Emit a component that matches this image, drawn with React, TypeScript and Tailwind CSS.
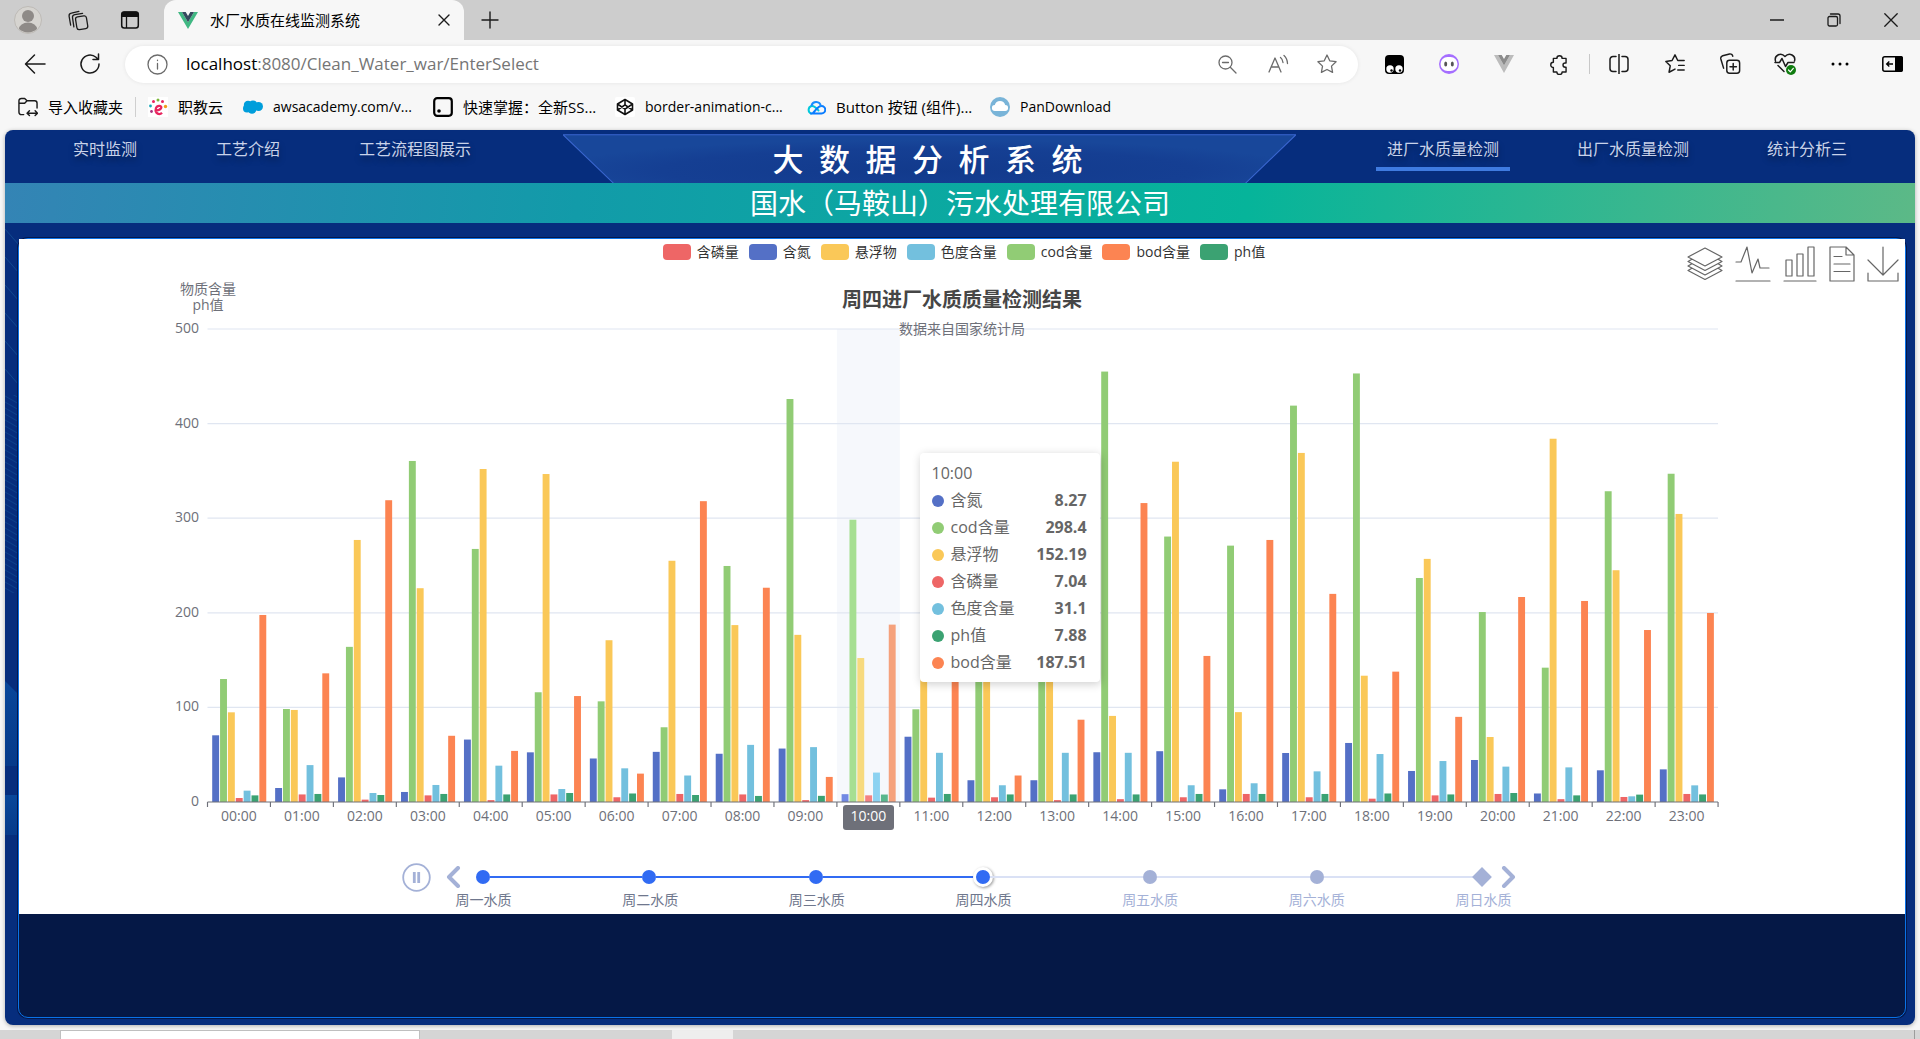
import React from "react";

const SERIES = [
  { name: "含氮", color: "#5470c6" },
  { name: "cod含量", color: "#91cc75" },
  { name: "悬浮物", color: "#fac858" },
  { name: "含磷量", color: "#ee6666" },
  { name: "色度含量", color: "#73c0de" },
  { name: "ph值", color: "#3ba272" },
  { name: "bod含量", color: "#fc8452" },
];
const ACTIVE_COLORS = ["#7189e3", "#a6df92", "#f7da7e", "#f48181", "#8cd2f1", "#5ab78d", "#f5a17c"];

const DATA = [
  [70.5, 130, 94.8, 4.2, 12, 7, 197.7],
  [14.8, 98.3, 97.3, 8, 39, 8.5, 136],
  [26, 164, 277, 2.5, 9.5, 7.4, 319],
  [10.6, 360.5, 226, 7, 18, 8.5, 70],
  [66, 267.5, 352, 2, 38.4, 8, 54],
  [52.5, 116, 346.7, 8, 13.7, 9.5, 112],
  [46, 106.4, 171, 5, 35.6, 9, 30],
  [53, 79, 255, 8.5, 28, 7.4, 318],
  [51, 249.5, 187, 8, 60.4, 6.4, 226.5],
  [56.5, 426, 176.7, 2, 58, 6.5, 26.5],
  [8.27, 298.4, 152.19, 7.04, 31.1, 7.88, 187.51],
  [69, 98, 318, 4.6, 52, 8.5, 200],
  [23, 200, 180, 5, 17.7, 8, 28],
  [23, 200, 180, 2, 52, 8, 87],
  [52.6, 455, 91, 3, 52, 8, 316],
  [53.7, 280.6, 359.7, 5, 17.7, 8.5, 154.4],
  [13.4, 271, 95, 8.5, 19.8, 8.5, 277],
  [51.8, 419, 369, 5, 32.4, 8.5, 220],
  [62.4, 453, 133.5, 3.5, 50.7, 9, 137.8],
  [32.8, 236.8, 257, 7, 43.3, 8, 90],
  [44.4, 200.8, 68.7, 8.5, 37.4, 9.5, 216.7],
  [9, 142, 384, 3, 36.6, 7, 212.5],
  [33.5, 328.5, 245, 5.3, 6, 7.8, 181.8],
  [34.5, 347, 304.5, 8.5, 17.6, 8, 199.8],
];

const LEGEND = [
  { name: "含磷量", box: "bg-[#ee6666]" },
  { name: "含氮", box: "bg-[#5470c6]" },
  { name: "悬浮物", box: "bg-[#fac858]" },
  { name: "色度含量", box: "bg-[#73c0de]" },
  { name: "cod含量", box: "bg-[#91cc75]" },
  { name: "bod含量", box: "bg-[#fc8452]" },
  { name: "ph值", box: "bg-[#3ba272]" },
];

const DAYS = ["周一水质", "周二水质", "周三水质", "周四水质", "周五水质", "周六水质", "周日水质"];

function Stroke({ size = 22, width, w = 1.5, vb = "0 0 24 24", color = "#1b1b1b", children }: {
  size?: number; width?: number; w?: number; vb?: string; color?: string; children: React.ReactNode;
}) {
  return (
    <svg width={width ?? size} height={size} viewBox={vb} fill="none" stroke={color} strokeWidth={w} strokeLinecap="round" strokeLinejoin="round" aria-hidden="true">
      {children}
    </svg>
  );
}

function IconButton({ label, className, children }: { label: string; className: string; children: React.ReactNode }) {
  return (
    <button type="button" aria-label={label} className={"flex shrink-0 items-center justify-center " + className}>
      {children}
    </button>
  );
}

function TabStrip() {
  return (
    <div className="flex h-10 items-stretch bg-[#cdcdcd] pr-px">
      <div className="flex w-[164px] shrink-0 items-center">
        <IconButton label="个人资料" className="ml-3.5 w-7">
          <svg width="28" height="28" viewBox="0 0 28 28">
            <circle cx="14" cy="14" r="13.500" fill="#d6d4d0" stroke="#bdbab6" />
            <circle cx="14" cy="10" r="6" fill="#8e8a87" />
            <path d="M5 23a9 6.500 0 0 1 18 0a13.400 13.400 0 0 1-18 0z" fill="#8e8a87" />
          </svg>
        </IconButton>
        <IconButton label="工作区" className="ml-6 w-6">
          <Stroke size={22} w={1.4}>
            <rect x="10" y="8" width="12" height="14" rx="2.500" transform="rotate(-9 16 15)" />
            <path d="M7.500 19.500 6 9.500a3 3 0 0 1 2.500-3.300L17 4.800M4 17.500 2.300 8a3 3 0 0 1 2.500-3.400L13 2.500" />
          </Stroke>
        </IconButton>
        <IconButton label="标签页操作" className="ml-7 w-6">
          <svg width="20" height="20" viewBox="0 0 20 20">
            <rect x="1.700" y="2" width="16.600" height="16" rx="2.500" fill="none" stroke="#111" strokeWidth="1.500" />
            <path d="M1.500 7V4A2.500 2.500 0 0 1 4 1.500h12A2.500 2.500 0 0 1 18.500 4v3z" fill="#111" />
            <path d="M6.500 7v11" stroke="#111" strokeWidth="1.300" />
          </svg>
        </IconButton>
      </div>
      <div className="flex w-[300px] shrink-0 items-center rounded-t-xl bg-[#f7f7f7] pl-3.5">
        <svg width="20" height="17" viewBox="0 0 20 17" aria-hidden="true">
          <path d="M0 0h4l6 10.300L16 0h4L10 17z" fill="#41b883" />
          <path d="M4 0h3.700L10 4l2.300-4H16l-6 10.300z" fill="#35495e" />
        </svg>
        <span className="ml-3 grow text-[15px] leading-5 text-black">水厂水质在线监测系统</span>
        <IconButton label="关闭标签页" className="mr-3 w-4">
          <Stroke size={12} w={1.400} vb="0 0 12 12"><path d="M1 1l10 10M11 1 1 11" /></Stroke>
        </IconButton>
      </div>
      <IconButton label="新建标签页" className="ml-3.5 w-6">
        <Stroke size={18} w={1.400} vb="0 0 18 18"><path d="M9 1v16M1 9h16" /></Stroke>
      </IconButton>
      <div className="grow" />
      <IconButton label="最小化" className="w-[57px]">
        <Stroke size={14} w={1.400} vb="0 0 14 14"><path d="M0 7h14" /></Stroke>
      </IconButton>
      <IconButton label="还原" className="w-[57px]">
        <Stroke size={14} w={1.300} vb="0 0 14 14">
          <rect x="1" y="3.500" width="9.500" height="9.500" rx="1.500" /><path d="M3.500 1H11a2 2 0 0 1 2 2v7.500" />
        </Stroke>
      </IconButton>
      <IconButton label="关闭窗口" className="w-[57px]">
        <Stroke size={14} w={1.300} vb="0 0 14 14"><path d="M.8.8l12.400 12.400M13.200.8.8 13.200" /></Stroke>
      </IconButton>
    </div>
  );
}

function Toolbar() {
  return (
    <div className="flex h-12 items-center">
      <IconButton label="后退" className="ml-6 w-[22px]">
        <Stroke size={22} w={1.500} vb="0 0 22 22"><path d="M21 11H2M10.500 2 1.500 11l9 9" /></Stroke>
      </IconButton>
      <IconButton label="刷新" className="ml-8 w-6">
        <Stroke size={22} w={1.500} vb="0 0 22 22"><path d="M20 11a9 9 0 1 1-3-6.700L19 6.200M19.500 1v5.500H14" /></Stroke>
      </IconButton>
      <div className="ml-[23px] flex h-[37px] grow items-center rounded-full bg-white pl-[22px] shadow-[0_0_4px_rgba(0,0,0,0.08)]">
        <Stroke size={21} w={1.300} vb="0 0 21 21" color="#6b6b6b">
          <circle cx="10.500" cy="10.500" r="9.500" /><path d="M10.500 9.500v5.500M10.500 6.200v.3" />
        </Stroke>
        <div className="relative ml-[18px] h-6 grow">
          <input aria-label="地址栏" defaultValue="localhost:8080/Clean_Water_war/EnterSelect" className="h-6 w-full bg-transparent text-[17px] leading-6 text-[#757575] outline-none" />
          <span aria-hidden="true" className="pointer-events-none absolute left-0 top-0 bg-white text-[17px] leading-6 text-black">localhost</span>
        </div>
        <IconButton label="缩小" className="w-[22px]">
          <Stroke size={19} w={1.300} vb="0 0 19 19" color="#6b6b6b"><circle cx="7.500" cy="7.500" r="6.500" /><path d="M4.500 7.500h6M12.300 12.300 18 18" /></Stroke>
        </IconButton>
        <IconButton label="大声朗读" className="ml-7 w-6">
          <Stroke size={21} w={1.300} vb="0 0 21 21" color="#6b6b6b"><path d="M1 18 7 4l6 14M3.200 13h7.600M12.500 3.500q2 1.500 2.500 5M16 1.500q3.300 3 3.500 8" /></Stroke>
        </IconButton>
        <IconButton label="收藏此页" className="ml-[25px] mr-[19px] w-6">
          <Stroke size={22} w={1.400} color="#6b6b6b"><path d="m12 2.200 3 6.300 6.900 1-5 4.800 1.200 6.900L12 18l-6.100 3.200 1.200-6.900-5-4.800 6.900-1z" /></Stroke>
        </IconButton>
      </div>
      <IconButton label="篡改猴" className="ml-[25px] w-[22px]">
        <svg width="19" height="19" viewBox="0 0 19 19">
          <rect width="19" height="19" rx="4" fill="#000" /><circle cx="5" cy="14" r="3.700" fill="#fff" /><circle cx="14" cy="14" r="3.700" fill="#fff" />
          <circle cx="6.500" cy="15.500" r="1.200" fill="#000" /><circle cx="15" cy="15.500" r="1.200" fill="#000" />
        </svg>
      </IconButton>
      <IconButton label="扩展" className="ml-[33px] w-[22px]">
        <svg width="20" height="20" viewBox="0 0 20 20">
          <circle cx="10" cy="10" r="10" fill="#a56eff" /><rect x="1.500" y="3" width="17" height="14" rx="7" fill="#fff" />
          <ellipse cx="6.700" cy="10" rx="1.500" ry="2.500" fill="#555" /><ellipse cx="13.300" cy="10" rx="1.500" ry="2.500" fill="#555" />
        </svg>
      </IconButton>
      <IconButton label="Vue 开发工具" className="ml-[33px] w-[22px]">
        <svg width="20" height="18" viewBox="0 0 20 18">
          <path d="M0 0h4l6 10.500L16 0h4L10 18z" fill="#bcbcbc" /><path d="M4 0h3.700L10 4l2.300-4H16l-6 10.500z" fill="#8b8b8b" />
        </svg>
      </IconButton>
      <IconButton label="扩展程序" className="ml-[33px] w-[22px]">
        <Stroke size={21} w={1.600}><path d="M9 5a3 3 0 0 1 6 0h4.500v5.200h-1a2.500 2.500 0 0 0 0 5h1V20.500H15a3 3 0 0 1-6 0H5v-5a3 3 0 0 1 0-6V5z" /></Stroke>
      </IconButton>
      <span className="ml-[19px] h-5 w-px bg-[#c8c8c8]" />
      <IconButton label="拆分屏幕" className="ml-[18px] w-[22px]">
        <Stroke size={20} w={1.500} vb="0 0 20 20"><path d="M7 2.500H4a3 3 0 0 0-3 3v9a3 3 0 0 0 3 3h3M13 2.500h3a3 3 0 0 1 3 3v9a3 3 0 0 1-3 3h-3M10 0v20" /></Stroke>
      </IconButton>
      <IconButton label="收藏夹" className="ml-[34px] w-[22px]">
        <Stroke size={22} w={1.600}><path d="M12 17.500 5.500 21l1.300-7L2 9.200l6.800-1L12 2l3 6.200h7M16 13.500h6M15 18.500h7" /></Stroke>
      </IconButton>
      <IconButton label="集锦" className="ml-[33px] w-[22px]">
        <Stroke size={22} w={1.600}><rect x="8.500" y="8" width="14" height="14" rx="3" /><path d="M15.500 11.500v7M12 15h7M5 16.500 2 6.500a3 3 0 0 1 2-3.500l7.500-2A3 3 0 0 1 15 3.500" /></Stroke>
      </IconButton>
      <IconButton label="浏览器概要" className="ml-[33px] w-[22px]">
        <svg width="22" height="24" viewBox="0 0 22 24" fill="none" stroke="#1b1b1b" strokeWidth="1.500" strokeLinecap="round" strokeLinejoin="round">
          <path d="M1.500 9C0 4 6.500-.5 11 4.500 15.500-.5 22 4 20.500 9M4 13.500l6 6M1 10.500h4.500L8 6.500l3.500 8 2.500-4h6" />
          <circle cx="17" cy="18" r="5" fill="#107c10" stroke="none" /><path d="m14.500 18 1.800 1.800 3-3.500" stroke="#fff" strokeWidth="1.200" />
        </svg>
      </IconButton>
      <IconButton label="设置及其他" className="ml-[33px] w-[22px]">
        <svg width="18" height="4" viewBox="0 0 18 4"><circle cx="2" cy="2" r="1.500" /><circle cx="9" cy="2" r="1.500" /><circle cx="16" cy="2" r="1.500" /></svg>
      </IconButton>
      <IconButton label="侧边栏" className="ml-[30px] mr-[17px] w-[22px]">
        <svg width="21" height="16" viewBox="0 0 21 16">
          <rect x=".8" y=".8" width="19.400" height="14.400" rx="2" fill="none" stroke="#000" strokeWidth="1.500" /><path d="M13 0h6a2 2 0 0 1 2 2v12a2 2 0 0 1-2 2h-6z" />
          <path d="M11 8H5m2.300-2.500L4.700 8l2.600 2.500" fill="none" stroke="#000" strokeWidth="1.400" />
        </svg>
      </IconButton>
    </div>
  );
}

function Bookmark({ label, className, children }: { label: string; className: string; children: React.ReactNode }) {
  return (
    <a href="#" className={"flex shrink-0 items-center gap-2.5 whitespace-nowrap leading-5 " + className}>
      <span className="flex w-5 shrink-0 justify-center">{children}</span>
      <span>{label}</span>
    </a>
  );
}

function Bookmarks() {
  return (
    <nav aria-label="收藏夹栏" className="mb-0.5 flex h-[38px] items-center pl-[18px] text-black">
      <Bookmark label="导入收藏夹" className="w-[117px] text-[15px]">
        <svg width="21" height="20" viewBox="0 0 21 20" fill="none" stroke="#1b1b1b" strokeWidth="1.500" strokeLinecap="round" strokeLinejoin="round">
          <path d="M6 18H3.500A2.500 2.500 0 0 1 1 15.500v-12A2.500 2.500 0 0 1 3.500 1H7l2.500 2.500h8A2.500 2.500 0 0 1 20 6v5M1 6h6l2.500-2.500M10 16.500h10M12 14l-2.500 2.500L12 19M18 14l2.500 2.500L18 19" />
        </svg>
      </Bookmark>
      <span className="mr-3 h-5 w-px shrink-0 bg-[#cfcfcf]" />
      <Bookmark label="职教云" className="w-[95px] text-[15px]">
        <svg width="20" height="20" viewBox="0 0 20 20">
          <rect width="20" height="20" fill="#fff" />
          <path d="M7 13.500c6.500 0 8-4.300 4.500-4.700-3.500-.3-5 4-3 7 1.300 1.700 4 1.700 5.500 0" fill="none" stroke="#e8255f" strokeWidth="2.300" />
          <circle cx="10" cy="3" r="1.500" fill="#7cb83c" /><circle cx="5.500" cy="4.500" r="1.500" fill="#e8255f" /><circle cx="2.500" cy="9" r="1.400" fill="#18a8b8" />
          <circle cx="14.500" cy="4.500" r="1.500" fill="#e8255f" /><circle cx="17.500" cy="9.500" r="1.700" fill="#f29a1a" /><circle cx="3.500" cy="14.500" r="1.400" fill="#a83280" />
        </svg>
      </Bookmark>
      <Bookmark label="awsacademy.com/v..." className="w-[190px] text-[14px]">
        <svg width="20" height="14" viewBox="0 0 20 14"><g fill="#009edb"><circle cx="5" cy="5" r="4.200" /><circle cx="10" cy="4.500" r="4" /><circle cx="15.500" cy="6.500" r="4.500" /><circle cx="4" cy="8.500" r="4" /><circle cx="9" cy="9.500" r="4.300" /></g></svg>
      </Bookmark>
      <Bookmark label="快速掌握：全新SS..." className="w-[182px] text-[15px]">
        <svg width="20" height="20" viewBox="0 0 20 20"><rect x="1.200" y="1.200" width="17.600" height="17.600" rx="3" fill="none" stroke="#000" strokeWidth="2.200" /><circle cx="6" cy="14" r="1.800" /></svg>
      </Bookmark>
      <Bookmark label="border-animation-c..." className="w-[191px] text-[14px]">
        <svg width="20" height="20" viewBox="0 0 20 20"><rect width="20" height="20" rx="2" fill="#fff" /><path d="M10 2.500 17.500 7v6L10 17.500 2.500 13V7zM2.500 7 10 12.200 17.500 7M2.500 13 10 7.800l7.500 5.200M10 2.500v5.300M10 12.200v5.300" fill="none" stroke="#111" strokeWidth="1.600" strokeLinejoin="round" /></svg>
      </Bookmark>
      <Bookmark label="Button 按钮 (组件)..." className="w-[184px] text-[15px]">
        <svg width="20" height="16" viewBox="0 0 20 16" fill="none" strokeWidth="2" strokeLinecap="round">
          <path d="M5 14.500a4 4 0 0 1 .5-7.500c3-.5 4.500 1.500 7 4.500" stroke="#00c8dc" /><path d="M5 14.500h10.500a3.700 3.700 0 0 0 0-7.500C12 7 11 10 7 14" stroke="#0a7cff" /><path d="M5.500 6.500a4.800 4.800 0 0 1 9.300.5" stroke="#1a8cff" />
        </svg>
      </Bookmark>
      <Bookmark label="PanDownload" className="w-[140px] text-[14px]">
        <svg width="20" height="20" viewBox="0 0 20 20"><circle cx="10" cy="10" r="10" fill="#79b4d8" /><path d="M5 14a3 3 0 0 1-.2-6 5.400 5.400 0 0 1 10.400 0A3 3 0 0 1 15 14z" fill="#fff" /></svg>
      </Bookmark>
    </nav>
  );
}

function NavLink({ label, active = false }: { label: string; active?: boolean }) {
  return (
    <a
      href="#"
      aria-current={active ? "page" : undefined}
      className={
        "shrink-0 border-b-4 px-[11px] pb-[7px] pt-2 text-base leading-[22px] text-[#c9d3ea] [text-shadow:0_4px_6px_rgba(0,0,0,0.4)] " +
        (active ? "border-[#3f7be0]" : "border-transparent")
      }
    >
      {label}
    </a>
  );
}

function Header() {
  return (
    <header className="relative grid h-[53px] grid-cols-[558fr_733fr_619fr] overflow-hidden rounded-t-lg">
      <nav aria-label="工艺" className="flex items-start gap-[57px] pl-[57px]">
        <NavLink label="实时监测" />
        <NavLink label="工艺介绍" />
        <NavLink label="工艺流程图展示" />
      </nav>
      <div className="relative">
        <svg className="absolute inset-0 h-full w-full" viewBox="0 0 733 53" preserveAspectRatio="none" aria-hidden="true">
          <defs>
            <radialGradient id="plate" cx="50%" cy="60%" r="52%">
              <stop offset="0" stopColor="#123a8c" /><stop offset=".7" stopColor="#153f93" /><stop offset="1" stopColor="#18479a" />
            </radialGradient>
          </defs>
          <path d="M0 4.500h733L671 62H62z" fill="url(#plate)" stroke="#3a66cf" strokeWidth="1" />
        </svg>
        <h1 className="relative whitespace-nowrap pr-1 pt-[3px] text-center text-[31px] font-medium leading-[52px] text-white">大&ensp;数&ensp;据&ensp;分&ensp;析&ensp;系&ensp;统</h1>
      </div>
      <nav aria-label="水质" className="flex items-start gap-14 pl-20">
        <NavLink label="进厂水质量检测" active />
        <NavLink label="出厂水质量检测" />
        <NavLink label="统计分析三" />
      </nav>
    </header>
  );
}

const X0 = 188.5;
const BAND = 62.94;
const BASE = 538;
const UNIT = 0.946;

function Plot() {
  return (
    <svg viewBox="0 0 1886 576" className="block h-auto w-full text-[14px]" role="img" aria-label="周四进厂水质质量检测结果">
      <text fill="#6e7079" textAnchor="middle">
        <tspan x="189" y="30">物质含量</tspan>
        <tspan x="189" y="46">ph值</tspan>
      </text>
      <rect x={X0 + 10 * BAND} y="65" width={BAND} height={BASE - 65} fill="#f6f8fc" />
      {[100, 200, 300, 400, 500].map((v) => (
        <line key={v} x1={X0} x2={X0 + 24 * BAND} y1={BASE - v * UNIT} y2={BASE - v * UNIT} stroke="#e0e6f1" strokeWidth="1.200" />
      ))}
      {[0, 100, 200, 300, 400, 500].map((v) => (
        <text key={v} x="180" y={BASE - v * UNIT + 4} textAnchor="end" fill="#6e7079">{v}</text>
      ))}
      {DATA.map((row, i) => (
        <g key={i}>
          {row.map((v, s) => (
            <rect key={s} x={X0 + i * BAND + 4.700 + s * 7.860} y={BASE - v * UNIT} width="6.900" height={v * UNIT} fill={i === 10 ? ACTIVE_COLORS[s] : SERIES[s].color} />
          ))}
        </g>
      ))}
      <g stroke="#6e7079" strokeWidth="1.150">
        <line x1={X0} x2={X0 + 24 * BAND} y1={BASE} y2={BASE} />
        {Array.from({ length: 25 }, (_, i) => (
          <line key={i} x1={X0 + i * BAND} x2={X0 + i * BAND} y1={BASE} y2={BASE + 5} />
        ))}
      </g>
      <rect x="824" y="541" width="51" height="25" rx="3" fill="#6e7079" />
      {DATA.map((_, i) => (
        <text key={i} x={X0 + (i + 0.5) * BAND} y="557" textAnchor="middle" fill={i === 10 ? "#fff" : "#6e7079"}>
          {String(i).padStart(2, "0") + ":00"}
        </text>
      ))}
    </svg>
  );
}

function Tooltip() {
  return (
    <div className="absolute left-[47.75%] top-[189px] w-[180px] rounded bg-white pb-1.5 pl-3 pr-[13px] pt-[7px] text-base leading-[27px] text-[#666] shadow-[1px_2px_10px_rgba(0,0,0,0.2)]">
      <div>10:00</div>
      <dl>
        {SERIES.map((s, i) => (
          <div key={s.name} className="flex items-center">
            <span className="mr-[7px] size-3 rounded-full" style={{ backgroundColor: s.color }} />
            <dt className="grow">{s.name}</dt>
            <dd className="font-bold">{DATA[10][i]}</dd>
          </div>
        ))}
      </dl>
    </div>
  );
}

function Toolbox() {
  return (
    <div className="absolute right-1.5 top-[7px] flex items-center gap-3">
      <button type="button" aria-label="堆叠">
        <Stroke size={36} w={1.200} vb="0 0 36 36" color="#666">
          <path d="M18 2 35 11 18 20 1 11zM4.500 13.500 1 15.500l17 9 17-9-3.500-2M4.500 18 1 20l17 9 17-9-3.500-2M4.500 22.500 1 24.500l17 9 17-9-3.500-2" />
        </Stroke>
      </button>
      <button type="button" aria-label="切换为折线图">
        <Stroke size={36} w={1.200} vb="0 0 36 36" color="#666"><path d="M1 16h5L12 1l5 26 6-14 2 9h9M1 35h34" /></Stroke>
      </button>
      <button type="button" aria-label="切换为柱状图">
        <Stroke size={36} width={34} w={1.200} vb="0 0 34 36" color="#666"><path d="M1 35h32M3 14h6v16H3zM14 8h6v22h-6zM25 1h6v29h-6z" /></Stroke>
      </button>
      <button type="button" aria-label="数据视图">
        <Stroke size={36} width={26} w={1.200} vb="4 0 26 36" color="#666"><path d="M5 1h16l8 8v26H5zM21 1v8h8M9 10.500h8M9 18h16M9 25.500h16" /></Stroke>
      </button>
      <button type="button" aria-label="保存为图片">
        <Stroke size={36} width={32} w={1.200} vb="1 0 32 36" color="#666"><path d="M17 1v28M2 14l15 15 15-15M2 27v8h30v-8" /></Stroke>
      </button>
    </div>
  );
}

function Timeline() {
  return (
    <div className="flex justify-center pb-[7px] pr-1 pt-[21px]">
      <div className="w-[1117px]">
        <div className="flex h-8 items-center">
          <button type="button" aria-label="暂停">
            <svg width="29" height="29" viewBox="0 0 29 29" fill="none" stroke="#a4b1d7"><circle cx="14.500" cy="14.500" r="13.300" strokeWidth="1.800" /><path d="M12.300 9v11M16.700 9v11" strokeWidth="2.800" /></svg>
          </button>
          <button type="button" aria-label="上一个" className="ml-3 mr-5">
            <Stroke size={22} w={4} vb="0 0 22 22" color="#a4b1d7"><path d="M15 2 6 11l9 9" /></Stroke>
          </button>
          <div className="-ml-[9px] flex grow items-center">
            {DAYS.map((d, i) => (
              <React.Fragment key={d}>
                {i > 0 && <span className={"h-0.5 grow basis-0 " + (i <= 3 ? "bg-[#316bf3]" : "bg-[#dae1f5]")} />}
                <button
                  type="button"
                  aria-label={d}
                  className={
                    i < 3
                      ? "size-3.5 rounded-full bg-[#316bf3]"
                      : i === 3
                      ? "-mx-[3px] size-5 rounded-full border-[3px] border-white bg-[#316bf3] shadow-[1px_1px_3px_rgba(0,0,0,0.4)]"
                      : i < 6
                      ? "size-3.5 rounded-full bg-[#a4b1d7]"
                      : "-mx-px size-3.5 rotate-45 bg-[#a4b1d7]"
                  }
                />
              </React.Fragment>
            ))}
          </div>
          <button type="button" aria-label="下一个" className="ml-2">
            <Stroke size={22} w={4} vb="0 0 22 22" color="#a4b1d7"><path d="m7 2 9 9-9 9" /></Stroke>
          </button>
        </div>
        <ol className="ml-[54px] flex w-[1056px] justify-between text-[14px] leading-[14px]">
          {DAYS.map((d, i) => (
            <li key={d} className={i <= 3 ? "text-[#6f778d]" : "text-[#a4b1d7]"}>{d}</li>
          ))}
        </ol>
      </div>
    </div>
  );
}

function Chart() {
  return (
    <section className="relative bg-white pt-[5px]">
      <ul className="flex h-4 items-center justify-center gap-2.5 pl-1 text-[14px] leading-4 text-[#333]">
        {LEGEND.map((l) => (
          <li key={l.name} className="flex items-center gap-1.5">
            <span className={"h-4 w-7 rounded " + l.box} />
            <span>{l.name}</span>
          </li>
        ))}
      </ul>
      <Toolbox />
      <div className="relative mt-1">
        <Plot />
        <div className="absolute inset-x-0 top-[22px] flex flex-col items-center gap-2">
          <h3 className="text-xl font-bold leading-7 text-[#464646]">周四进厂水质质量检测结果</h3>
          <p className="text-[14px] leading-[14px] text-[#6e7079]">数据来自国家统计局</p>
        </div>
        <Tooltip />
      </div>
      <Timeline />
    </section>
  );
}

function EdgeTexture() {
  return (
    <svg className="absolute left-0 top-[95px] h-[620px] w-3.5" aria-hidden="true">
      <defs>
        <pattern id="rays" width="14" height="28" patternUnits="userSpaceOnUse"><path d="M0 4 14 20" stroke="#14589a" strokeWidth="1" opacity=".6" /></pattern>
        <pattern id="dense" width="14" height="6" patternUnits="userSpaceOnUse"><path d="M0-3 14 5M0 3 14 11" stroke="#14589a" strokeWidth="1" opacity=".45" /></pattern>
        <linearGradient id="haze" x1="0" y1="0" x2="0" y2="1"><stop offset="0" stopColor="#09479a" /><stop offset="1" stopColor="#063a8a" /></linearGradient>
      </defs>
      <rect width="14" height="170" fill="url(#rays)" />
      <rect y="170" width="14" height="198" fill="url(#dense)" />
      <path d="M0 456 14 470v71H0z" fill="url(#haze)" />
      <path d="M0 570h14v40H0z" fill="url(#haze)" />
    </svg>
  );
}

function Taskbar() {
  return (
    <div className="flex h-[9px] overflow-hidden bg-[#d5d5d5]">
      <div className="ml-[60px] w-[360px] border-x border-t border-[#c0c0c0] bg-white" />
      <div className="ml-[252px] w-[61px] bg-[#eeeeee]" />
      <div className="grow" />
      <div className="mr-[5px] w-px bg-[#9c9c9c]" />
    </div>
  );
}

export default function App() {
  return (
    <div className="flex min-h-screen flex-col bg-[#f7f7f7] font-['Open_Sans','Noto_Sans_CJK_SC',sans-serif]">
      <TabStrip />
      <Toolbar />
      <Bookmarks />
      <main className="relative mx-[5px] mb-[5px] mt-[2px] flex grow flex-col rounded-lg bg-[#062d7d] shadow-[0_1px_4px_rgba(0,0,0,0.3)]">
        <EdgeTexture />
        <Header />
        <div className="flex h-10 items-center justify-center bg-[linear-gradient(96deg,#3484b5_0%,#129ba9_30%,#06b49a_65%,#5cb987_100%)]">
          <h2 className="text-[28px] leading-10 text-white">国水（马鞍山）污水处理有限公司</h2>
        </div>
        <div className="relative mb-[7px] ml-[13px] mr-[9px] mt-[15px] flex grow flex-col rounded-[10px] border border-[#0a72e8] bg-[#051846] shadow-[0_0_0_1px_#04174a]">
          <Chart />
          <div className="min-h-[60px] grow" />
        </div>
      </main>
      <Taskbar />
    </div>
  );
}
